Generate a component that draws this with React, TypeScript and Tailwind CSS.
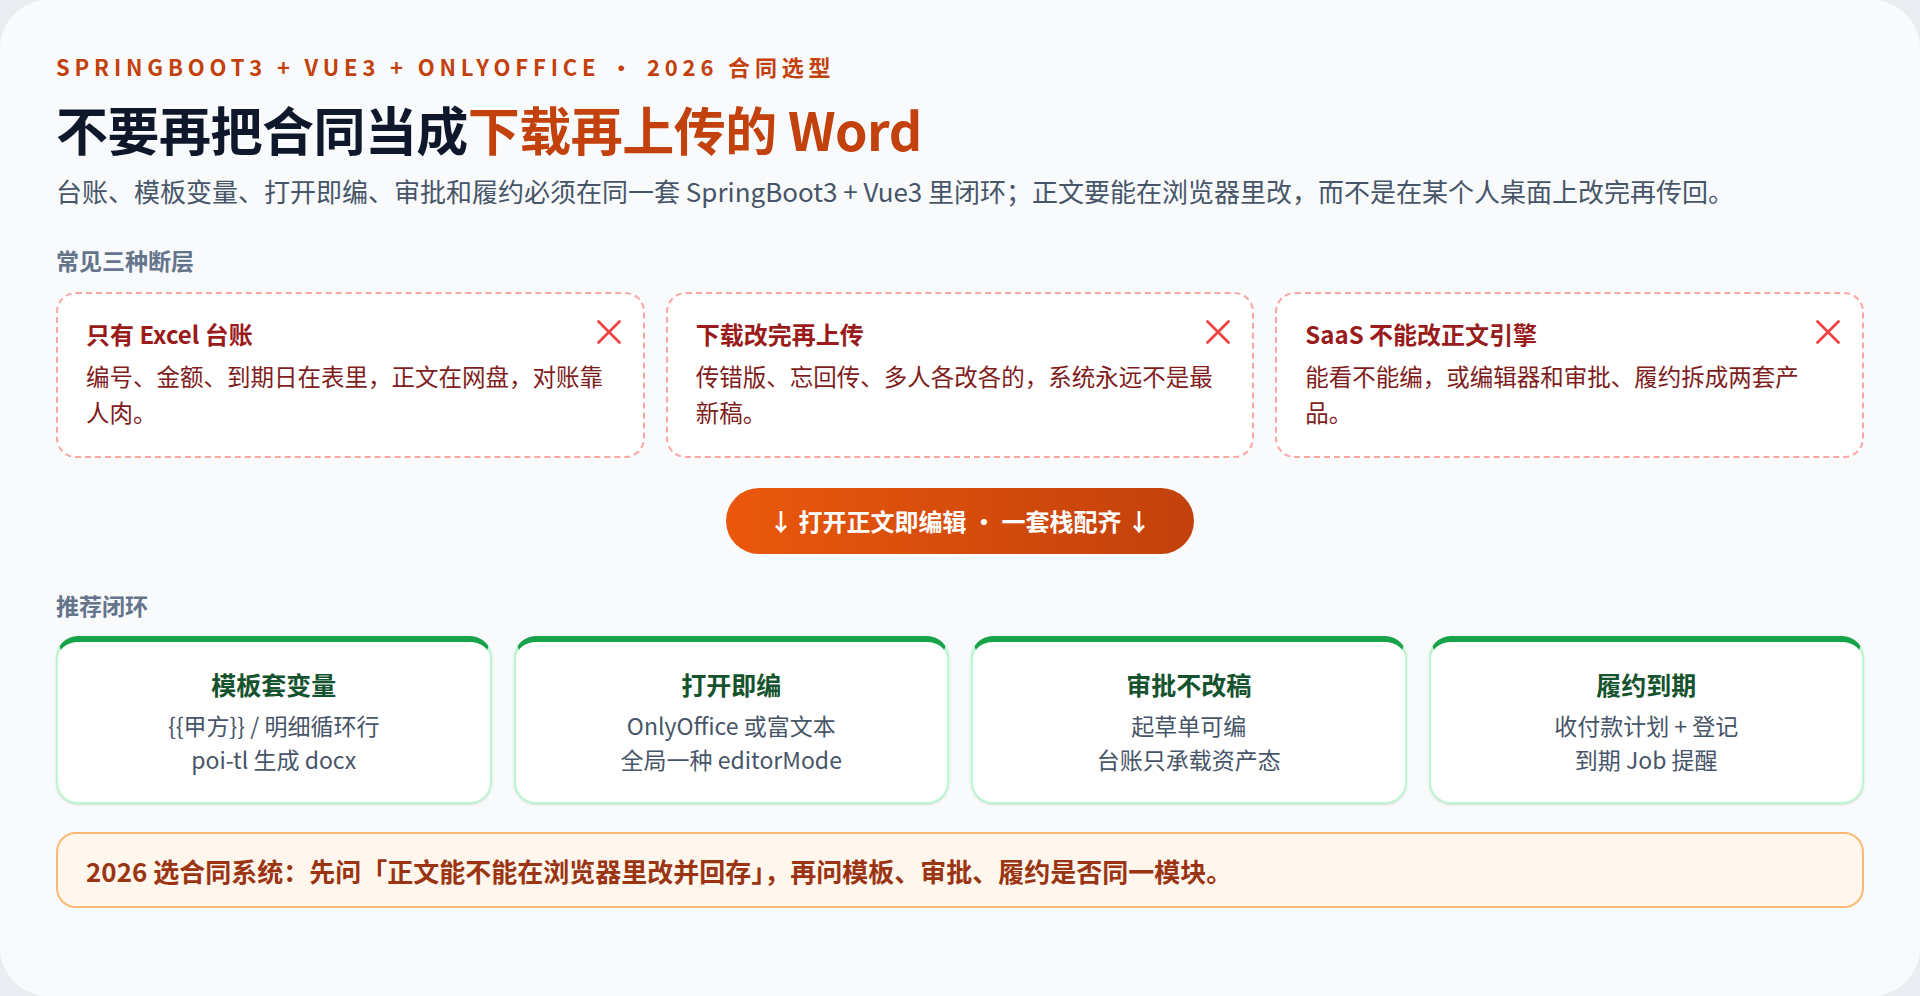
const font = { fontFamily: '"Noto Sans CJK SC", "Noto Sans", sans-serif' }

function XIcon() {
  return (
    <svg width="28" height="28" viewBox="0 0 24 24" fill="none" stroke="#ef4444" strokeWidth="2.4" strokeLinecap="round">
      <path d="M3 3 L21 21 M21 3 L3 21" />
    </svg>
  )
}

const gaps = [
  { title: '只有 Excel 台账', body: '编号、金额、到期日在表里，正文在网盘，对账靠人肉。' },
  { title: '下载改完再上传', body: '传错版、忘回传、多人各改各的，系统永远不是最新稿。' },
  { title: 'SaaS 不能改正文引擎', body: '能看不能编，或编辑器和审批、履约拆成两套产品。' },
]

const loops = [
  { title: '模板套变量', lines: ['{{甲方}} / 明细循环行', 'poi-tl 生成 docx'] },
  { title: '打开即编', lines: ['OnlyOffice 或富文本', '全局一种 editorMode'] },
  { title: '审批不改稿', lines: ['起草单可编', '台账只承载资产态'] },
  { title: '履约到期', lines: ['收付款计划 + 登记', '到期 Job 提醒'] },
]

export default function App() {
  return (
    <div className="h-[996px] w-[1920px] overflow-hidden bg-[#e9edf2]" style={font}>
      <div className="h-full w-full rounded-[48px] bg-[#f8fafc] px-[56px] pt-[50px]">
        <div className="text-[22px] font-bold uppercase tracking-[0.22em] text-[#c2410c]">
          SpringBoot3 + Vue3 + OnlyOffice • 2026 合同选型
        </div>
        <h1 className="mt-[12px] text-[52px] font-bold leading-[68px] tracking-[-0.01em] text-[#0f172a]">
          不要再把合同当成<span className="text-[#c2410c]">下载再上传的 Word</span>
        </h1>
        <p className="mt-[8px] max-w-[1690px] text-[26px] leading-[40px] text-[#475569]">
          台账、模板变量、打开即编、审批和履约必须在同一套 SpringBoot3 + Vue3 里闭环；正文要能在浏览器里改，而不是在某个人桌面上改完再传回。
        </p>
        <div className="mt-[32px] text-[23px] font-bold text-[#64748b]">常见三种断层</div>
        <div className="mt-[14px] grid grid-cols-3 gap-[21px]">
          {gaps.map((g) => (
            <div key={g.title} className="relative h-[166px] rounded-[20px] border-2 border-dashed border-[#fca5a5] bg-white px-[28px] pt-[22px]">
              <div className="absolute right-[20px] top-[24px]"><XIcon /></div>
              <div className="text-[24px] font-bold leading-[36px] text-[#991b1b]">{g.title}</div>
              <div className="mt-[6px] pr-[4px] text-[23.5px] leading-[36px] text-[#7f1d1d]">{g.body}</div>
            </div>
          ))}
        </div>
        <div className="mt-[30px] flex justify-center">
          <div className="flex h-[66px] w-[468px] items-center justify-center rounded-full bg-gradient-to-r from-[#ea580c] to-[#c2410c] text-[24px] font-bold text-white">
            ↓ 打开正文即编辑 • 一套栈配齐 ↓
          </div>
        </div>
        <div className="mt-[34px] text-[23px] font-bold text-[#64748b]">推荐闭环</div>
        <div className="mt-[14px] grid grid-cols-4 gap-[22px]">
          {loops.map((l) => (
            <div key={l.title} className="h-[168px] rounded-[22px] border-2 border-t-[6px] border-[#bbf7d0] border-t-[#16a34a] bg-white pt-[24px] text-center shadow-sm">
              <div className="text-[25px] font-bold leading-[36px] text-[#14532d]">{l.title}</div>
              <div className="mt-[6px] text-[23px] leading-[34px] text-[#475569]">
                {l.lines.map((x) => <div key={x}>{x}</div>)}
              </div>
            </div>
          ))}
        </div>
        <div className="mt-[28px] flex h-[76px] items-center rounded-[20px] border-2 border-[#fdba74] bg-[#fff7ed] px-[28px] text-[26px] font-bold text-[#9a3412]">
          2026 选合同系统：先问「正文能不能在浏览器里改并回存」，再问模板、审批、履约是否同一模块。
        </div>
      </div>
    </div>
  )
}
